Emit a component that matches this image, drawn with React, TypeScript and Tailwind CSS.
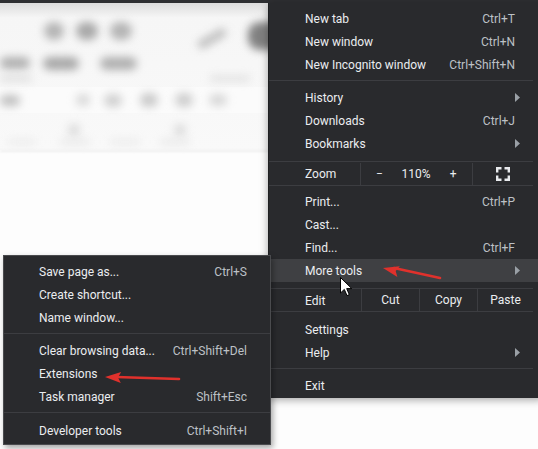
import React from "react";

type Item = { label: string; shortcut?: string; arrow?: boolean; hover?: boolean };

const textFont = "font-['Roboto','Open_Sans',sans-serif]";

function Arrow() {
  return (
    <svg width="6" height="9" viewBox="0 0 6 9" className="shrink-0">
      <path d="M0 0 L5 4.5 L0 9 Z" fill="#9aa0a6" />
    </svg>
  );
}

function Row({ item, sub }: { item: Item; sub?: boolean }) {
  return (
    <div
      className={`flex h-[23px] items-center ${sub ? "pl-[35px] pr-[23px]" : "pl-[36px] pr-[28px]"} ${
        item.hover ? "bg-[#3f4043]" : ""
      }`}
    >
      <span className="flex-1 pt-px text-[#ebedf0]">{item.label}</span>
      {item.shortcut && <span className="pt-px text-[#bdc1c6]">{item.shortcut}</span>}
      {item.arrow && (
        <span className="-mr-[17px] flex w-[17px] justify-start">
          <Arrow />
        </span>
      )}
    </div>
  );
}

function Sep({ className = "" }: { className?: string }) {
  return <div className={`h-px bg-[#3c3d41] ${className}`} />;
}

function FullscreenIcon() {
  return (
    <svg width="14" height="14" viewBox="0 0 14 14" fill="none" stroke="#e8eaed" strokeWidth="2.4">
      <path d="M1.2 5.5 V1.2 H5.5" />
      <path d="M8.5 1.2 H12.8 V5.5" />
      <path d="M12.8 8.5 V12.8 H8.5" />
      <path d="M5.5 12.8 H1.2 V8.5" />
    </svg>
  );
}

function RedArrow({ w, h }: { w: number; h: number }) {
  const y1 = 4;
  const y2 = h - 3;
  const angle = (Math.atan2(y2 - y1, w - 16) * 180) / Math.PI;
  return (
    <svg width={w} height={h} viewBox={`0 0 ${w} ${h}`} className="overflow-visible">
      <line x1={w - 2} y1={y2} x2="12" y2={y1} stroke="#e0312c" strokeWidth="2.6" strokeLinecap="round" />
      <path d={`M1 ${y1} L17 ${y1 - 5.5} L14 ${y1} L17 ${y1 + 5.5} Z`} fill="#e0312c" transform={`rotate(${angle} 1 ${y1})`} />
    </svg>
  );
}

function Cursor() {
  return (
    <svg width="13" height="20" viewBox="0 0 13 20">
      <path
        d="M0.5 0.5 L0.5 16 L4.3 12.4 L7 18.6 L9.3 17.6 L6.7 11.6 L11.8 11.6 Z"
        fill="#fff"
        stroke="#000"
        strokeWidth="1"
        strokeLinejoin="round"
      />
    </svg>
  );
}

function Blob({ className }: { className: string }) {
  return <div className={`shrink-0 blur-[4px] ${className}`} />;
}

function BlurredPage() {
  return (
    <div className="flex h-full flex-col bg-[#fdfdfd]">
      <div className="h-[3px] bg-[#2e2f32]" />
      <div className="flex h-[147px] flex-col bg-gradient-to-b from-[#dcdcdc] via-[#f6f6f6] via-[10%] to-[#f9f9f9]">
        <div className="mt-[14px] flex h-[28px] items-center">
          <Blob className="ml-[44px] h-[18px] w-[20px] rounded-full bg-[#b4b4b4]" />
          <Blob className="ml-[12px] h-[18px] w-[22px] rounded-full bg-[#a8a8a8]" />
          <Blob className="ml-[12px] h-[18px] w-[22px] rounded-full bg-[#b4b4b4]" />
          <Blob className="ml-[64px] mt-[14px] h-[9px] w-[32px] -rotate-[30deg] rounded-full bg-[#c0c0c0]" />
          <Blob className="ml-[20px] mt-[10px] h-[28px] w-[34px] rounded-[12px] bg-[#808080]" />
        </div>
        <div className="mt-[10px] flex h-[16px] items-center">
          <Blob className="h-[12px] w-[30px] rounded-full bg-[#b0b0b0]" />
          <Blob className="ml-[13px] h-[13px] w-[36px] rounded-full bg-[#a8a8a8]" />
          <Blob className="ml-[21px] h-[13px] w-[37px] rounded-full bg-[#b0b0b0]" />
        </div>
        <div className="mt-[3px] flex h-[8px] items-center">
          <Blob className="h-[5px] w-[32px] rounded-full bg-[#d8d8d8]" />
          <Blob className="ml-[178px] h-[5px] w-[40px] rounded-full bg-[#dcdcdc]" />
        </div>
        <div className="mt-[5px] flex h-[26px] items-center bg-[#fbfbfb]">
          <Blob className="h-[11px] w-[20px] rounded-full bg-[#c0c0c0]" />
          <Blob className="ml-[56px] h-[12px] w-[14px] rounded-full bg-[#d8d8d8]" />
          <Blob className="ml-[14px] h-[13px] w-[18px] rounded-full bg-[#d0d0d0]" />
          <Blob className="ml-[18px] h-[14px] w-[18px] rounded-full bg-[#cacaca]" />
          <Blob className="ml-[17px] h-[14px] w-[18px] rounded-full bg-[#cecece]" />
          <Blob className="ml-[16px] h-[12px] w-[18px] rounded-full bg-[#d8d8d8]" />
        </div>
        <div className="mt-[10px] flex h-[14px] items-center">
          <Blob className="ml-[68px] h-[12px] w-[12px] rounded-full bg-[#dadada]" />
          <Blob className="ml-[94px] h-[12px] w-[12px] rounded-full bg-[#dadada]" />
        </div>
        <div className="mt-[2px] flex h-[6px] items-center">
          <Blob className="ml-[8px] h-[4px] w-[28px] rounded-full bg-[#e6e6e6]" />
          <Blob className="ml-[24px] h-[4px] w-[30px] rounded-full bg-[#e2e2e2]" />
          <Blob className="ml-[20px] h-[4px] w-[30px] rounded-full bg-[#e6e6e6]" />
          <Blob className="ml-[20px] h-[4px] w-[30px] rounded-full bg-[#e2e2e2]" />
        </div>
      </div>
      <div className="h-[2px] bg-[#efefef] blur-[1px]" />
    </div>
  );
}

export default function App() {
  const top: Item[] = [
    { label: "New tab", shortcut: "Ctrl+T" },
    { label: "New window", shortcut: "Ctrl+N" },
    { label: "New Incognito window", shortcut: "Ctrl+Shift+N" },
  ];
  const mid: Item[] = [
    { label: "History", arrow: true },
    { label: "Downloads", shortcut: "Ctrl+J" },
    { label: "Bookmarks", arrow: true },
  ];
  const tools: Item[] = [
    { label: "Print...", shortcut: "Ctrl+P" },
    { label: "Cast..." },
    { label: "Find...", shortcut: "Ctrl+F" },
    { label: "More tools", arrow: true, hover: true },
  ];
  const bottom: Item[] = [{ label: "Settings" }, { label: "Help", arrow: true }];

  return (
    <div className={`relative h-[449px] w-[538px] overflow-hidden bg-white text-[12px] ${textFont}`}>
      <BlurredPage />

      {/* main chrome menu */}
      <div className="absolute left-[268px] top-[3px] w-[275px] border-l border-[#1f2022] bg-[#292a2d] pt-[4px] pb-[1px] shadow-[0_2px_8px_rgba(0,0,0,0.35)]">
        {top.map((i) => (
          <Row key={i.label} item={i} />
        ))}
        <Sep className="mt-[4px] mb-[5px] mr-[10px]" />
        {mid.map((i) => (
          <Row key={i.label} item={i} />
        ))}
        <Sep className="mt-[6px] mr-[10px]" />
        <div className="mr-[10px] flex h-[23px] items-center pt-px text-[#ebedf0]">
          <span className="w-[92px] pl-[36px]">Zoom</span>
          <div className="flex h-full flex-1 items-center border-l border-[#3c3d41]">
            <span className="w-[37px] text-center">−</span>
            <span className="w-[36px] text-center">110%</span>
            <span className="w-[38px] text-center">+</span>
          </div>
          <div className="flex h-full w-[62px] items-center justify-center border-l border-[#3c3d41]">
            <FullscreenIcon />
          </div>
        </div>
        <Sep className="mb-[4px] mr-[10px]" />
        {tools.map((i) => (
          <Row key={i.label} item={i} />
        ))}
        <Sep className="mt-[6px] mr-[10px]" />
        <div className="mr-[10px] flex h-[22px] items-center text-[#ebedf0]">
          <span className="w-[92px] pl-[36px] pt-px">Edit</span>
          <span className="flex h-full w-[58px] items-center justify-center border-l border-[#3c3d41]">Cut</span>
          <span className="flex h-full w-[58px] items-center justify-center border-l border-[#3c3d41]">Copy</span>
          <span className="flex h-full flex-1 items-center justify-center border-l border-[#3c3d41]">Paste</span>
        </div>
        <Sep className="mb-[6px] mr-[10px]" />
        {bottom.map((i) => (
          <Row key={i.label} item={i} />
        ))}
        <Sep className="mt-[4px] mb-[5px] mr-[10px]" />
        <Row item={{ label: "Exit" }} />
      </div>

      {/* more tools submenu */}
      <div className="absolute left-[3px] top-[255px] w-[268px] border border-[#4a4b4e] bg-[#292a2d] pt-[4px] pb-[2px] shadow-[2px_3px_6px_rgba(0,0,0,0.35)]">
        <Row sub item={{ label: "Save page as...", shortcut: "Ctrl+S" }} />
        <Row sub item={{ label: "Create shortcut..." }} />
        <Row sub item={{ label: "Name window..." }} />
        <Sep className="mt-[4px] mb-[5px]" />
        <Row sub item={{ label: "Clear browsing data...", shortcut: "Ctrl+Shift+Del" }} />
        <Row sub item={{ label: "Extensions" }} />
        <Row sub item={{ label: "Task manager", shortcut: "Shift+Esc" }} />
        <Sep className="mt-[4px] mb-[6px]" />
        <Row sub item={{ label: "Developer tools", shortcut: "Ctrl+Shift+I" }} />
      </div>

      {/* annotations */}
      <div className="absolute left-[382px] top-[264px]">
        <RedArrow w={60} h={17} />
      </div>
      <div className="absolute left-[104px] top-[373px]">
        <RedArrow w={77} h={9} />
      </div>
      <div className="absolute left-[340px] top-[277px]">
        <Cursor />
      </div>
    </div>
  );
}
